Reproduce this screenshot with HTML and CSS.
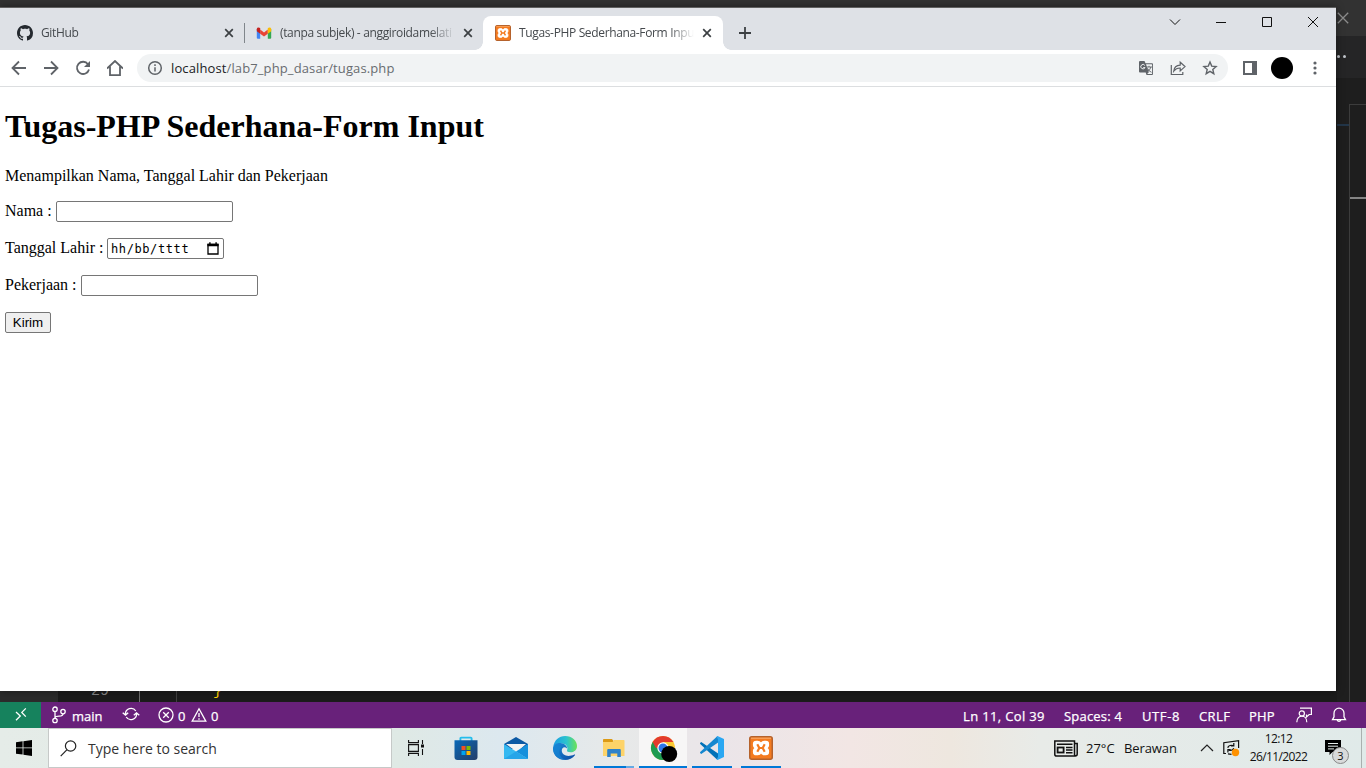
FILE: index.html
```html
<!DOCTYPE html>
<html lang="id">
<head>
<meta charset="utf-8">
<title>Tugas-PHP Sederhana-Form Input</title>
<link rel="stylesheet" href="styles.css">
</head>
<body>
<svg width="0" height="0" class="defs">
  <symbol id="close" viewBox="0 0 16 16"><path d="M4.2 4.2l7.6 7.6M11.8 4.2l-7.6 7.6" stroke="#3c4043" stroke-width="1.7"/></symbol>
  <symbol id="xampp" viewBox="0 0 24 24">
    <rect x=".75" y=".75" width="22.5" height="22.5" rx="2" fill="#f47b20" stroke="#b5622c" stroke-width="1.5"/>
    <path d="M2 2.200h20" stroke="#f9ad6f"/>
    <path d="M7.200 5.300h1.600q2.200 0 3.200 2.200 1-2.200 3.200-2.200h1.600q2.700 0 2.700 2.700v1.200q0 1.500-1.700 2.800 1.700 1.300 1.700 2.800V16q0 2.700-2.700 2.700h-1.600q-2.200 0-3.200-2.200-1 2.200-3.200 2.200H7.200Q4.500 18.700 4.500 16v-1.200q0-1.500 1.700-2.800-1.700-1.300-1.700-2.800V8q0-2.700 2.700-2.700z" fill="#fff" stroke="#fff" stroke-width="1.200" stroke-linejoin="round"/>
    <path d="M8.300 8.300l2 3.700-2 3.700M15.700 8.300l-2 3.700 2 3.700M10.300 12h3.400" fill="none" stroke="#f47b20" stroke-width="2.200"/>
  </symbol>
</svg>
<div class="desktop">
  <div class="editor">
    <div class="ed-title"><svg width="12" height="12" viewBox="0 0 12 12"><path d="M.8.8l10.4 10.4M11.2.8L.8 11.2" stroke="#8c8c8c" stroke-width="1.3"/></svg></div>
    <div class="ed-tabs"><i></i><i></i></div>
    <div class="ed-body">
      <div class="ed-activity"></div>
      <div class="ed-code"><span class="ln">29</span><span class="guide g1"></span><span class="guide g2"></span><span class="brace">}</span></div>
      <div class="ed-blue"></div>
      <div class="ed-ruler"><div class="ed-mark"></div></div>
    </div>
  </div>

  <div class="status">
    <div class="remote"><svg width="16" height="16" viewBox="0 0 16 16" fill="none" stroke="#fff" stroke-width="1.3"><path d="M3 6l4.300 4L3 14.200M12.800 2.400L8.800 6.400l4 4.200"/></svg></div>
    <div class="st branch"><svg width="16" height="18" viewBox="0 0 16 18" fill="none" stroke="#fff" stroke-width="1.3"><circle cx="4" cy="3.2" r="2.2"/><circle cx="4" cy="14.5" r="2.2"/><circle cx="12" cy="5.6" r="2.2"/><path d="M4 5.4v6.9M12 7.8c0 2.4-2 2.4-4 2.4s-4 .3-4 2.1"/></svg><span>main</span></div>
    <div class="st sync"><svg width="18" height="14" viewBox="0 0 18 14" fill="none" stroke="#fff" stroke-width="1.3"><path d="M3.500 7.500A5.600 5.600 0 0 1 13.800 4M14.500 6.500A5.600 5.600 0 0 1 4.200 10M.7 5.700l2.800 2.400 2.700-2.400M17.300 8.300l-2.800-2.400-2.700 2.400"/></svg></div>
    <div class="st probs"><svg width="16" height="16" viewBox="0 0 16 16" fill="none" stroke="#fff" stroke-width="1.3"><circle cx="8" cy="8" r="7"/><path d="M5.2 5.2l5.6 5.6M10.8 5.2l-5.6 5.6"/></svg><span class="n1">0</span><svg width="16" height="16" viewBox="0 0 16 16" fill="none" stroke="#fff" stroke-width="1.3"><path d="M8 1.800l6.800 12.400H1.200zM8 6v4M8 11.200v1.500"/></svg><span class="n2">0</span></div>
    <div class="st-right">
      <span class="s-ln">Ln 11, Col 39</span><span class="s-sp">Spaces: 4</span><span class="s-utf">UTF-8</span><span class="s-crlf">CRLF</span><span class="s-php">PHP</span>
      <svg class="fb" width="18" height="16" viewBox="0 0 18 16" fill="none" stroke="#fff" stroke-width="1.2"><circle cx="6.8" cy="6.4" r="2.6"/><path d="M1.8 15.2c0-8 10-8 10 0M5 1.2h11.4v6.300h-2.200L11.500 10V7.500"/></svg>
      <svg class="bell" width="16" height="16" viewBox="0 0 16 16" fill="none" stroke="#fff" stroke-width="1.3"><path d="M1.500 12.600h13L13 9.800V6.200a5 5 0 0 0-10 0v3.600zM6.200 13a1.900 1.900 0 0 0 3.600 0"/></svg>
    </div>
  </div>

  <div class="taskbar">
    <div class="start"><svg width="16" height="16" viewBox="0 0 16 16"><path d="M0 2.200l6.600-.9v6.200H0zM7.400 1.200L16 0v7.500H7.400zM0 8.300h6.600v6.300L0 13.700zM7.400 8.300H16V16l-8.600-1.200z"/></svg></div>
    <div class="search"><svg width="17" height="17" viewBox="0 0 17 17" fill="none" stroke="#222" stroke-width="1.2"><circle cx="10.6" cy="6" r="5.2"/><path d="M6.8 9.8L.7 16.2"/></svg><span>Type here to search</span></div>
    <div class="app"><svg width="16" height="16" viewBox="0 0 16 16" fill="none" stroke="#111" stroke-width="1.1"><path d="M.6 0v2.600h9.800V0M.6 16v-2.600h9.800V16M.6 4.600h9.800v6.800H.6zM14.500 0v4M14.500 9v6"/><path d="M13 4.500h3v3h-3z" fill="#111" stroke="none"/></svg></div>
    <div class="app m2"><svg width="24" height="24" viewBox="0 0 24 24"><defs><linearGradient id="st" x2="1" y2="1"><stop stop-color="#0869b8"/><stop offset="1" stop-color="#253d68"/></linearGradient></defs><path d="M6.400 6V2.400q0-.8.8-.8h9.600q.8 0 .8.800V6" fill="none" stroke="#25bdec" stroke-width="1.900"/><path d="M.5 4.300h23V21q0 3-3 3h-17q-3 0-3-3z" fill="url(#st)"/><path d="M7.500 10h4v4h-4z" fill="#f25022"/><path d="M12.500 10h4v4h-4z" fill="#7fba00"/><path d="M7.500 15h4v4h-4z" fill="#00a4ef"/><path d="M12.500 15h4v4h-4z" fill="#ffb900"/></svg></div>
    <div class="app m2"><svg width="24" height="22" viewBox="0 0 24 22"><path d="M0 7L12 0l12 7v5H0z" fill="#0c59a4"/><path d="M2 7h20l-9 8z" fill="#f3f3f3"/><path d="M0 7l24 15H0z" fill="#35b8f1"/><path d="M24 7v15L12 14.500z" fill="#1690dc"/><path d="M0 22l12-7.500L24 22z" fill="#26a5e9"/></svg></div>
    <div class="app m1"><svg width="24" height="24" viewBox="0 0 24 24"><defs><linearGradient id="eg" x2="1"><stop stop-color="#1b9de2"/><stop offset=".55" stop-color="#2bc3cf"/><stop offset="1" stop-color="#6de256"/></linearGradient><linearGradient id="eb" x2="1" y2="1"><stop stop-color="#1a8cdb"/><stop offset="1" stop-color="#0b4ba3"/></linearGradient></defs><path d="M.3 11C1 4.300 6 0 12.200 0 19 0 24 4.600 24 10c0 4-3 6.300-6.400 6.300-2.600 0-4.100-1-3.500-2.300.9-1.800.3-5.800-4.600-6.600C6 6.800 2 8 .3 11z" fill="url(#eg)"/><path d="M0 12.200C.3 8.500 4 6.600 7.500 7c3.500.3 6.300 2.500 6.600 5.400C11 9.800 8.500 12 8.800 15c.4 4 5.600 6.700 12.600 3.500.6-.2.9 0 .5.700C19.800 22.200 16 24 12 24 5.300 24-.3 19 0 12.200z" fill="url(#eb)"/><path d="M8.500 10.500C4 16 7 22.500 13 23.900 5 24.500-.2 18 0 12.200c1-2.500 5-4 8.500-1.700z" fill="#1685d4" opacity=".7"/></svg></div>
    <div class="app fold"><svg width="22" height="19" viewBox="0 0 22 19"><path d="M0 .8Q0 0 .8 0h8.200L10.500 2v2H0z" fill="#dc9a16"/><path d="M0 3h9.500l1.500-2h9.700q.8 0 .8.800V17H0z" fill="#fdd369"/><path d="M4.200 18V11q0-1 1-1h11.600q1 0 1 1v7h-3.500v-3.500H7.700V18z" fill="#2f82c9"/></svg><b class="line split"></b></div>
    <div class="app chrome m2"><svg width="28" height="28" viewBox="0 0 28 28"><circle cx="13" cy="13" r="12" fill="#fcc934"/><path d="M13 13L2.600 7A12 12 0 0 0 13 25l5-9-5-3z" fill="#1e9b50"/><path d="M2.600 7A12 12 0 0 1 23.400 7H13v6H6z" fill="#e33b2e"/><circle cx="13" cy="13" r="5.700" fill="#fff"/><circle cx="13" cy="13" r="4.500" fill="#2d75e8"/><circle cx="19.200" cy="19" r="8" fill="#000"/></svg><b class="line full"></b></div>
    <div class="app m1"><svg width="24" height="24" viewBox="0 0 24 24"><path d="M1.600 6.300q-.5-.4-1 .1L.2 7q-.4.500 0 1L17.500 24l1-6.200z" fill="#0071b8"/><path d="M1.600 17.700q-.5.400-1-.1L.2 17q-.4-.5 0-1L17.500 0l1 6.200z" fill="#1687cf"/><path d="M17.500 0L24 3v18l-6.500 3-.9-1q1.400-.4 1.400-1.800V2.800Q18 1.400 16.600 1z" fill="#2aa7f2"/></svg><b class="line"></b></div>
    <div class="app m1"><svg width="24" height="24"><use href="#xampp"/></svg><b class="line"></b></div>
    <div class="tray">
      <svg class="news" width="24" height="17" viewBox="0 0 24 17" fill="none" stroke="#111" stroke-width="1.500"><path d="M20.500 3.500h2.700v10.500q0 2-2 2M.8 1h19.700v13.500q0 1.500 1.500 1.500H2.500Q.8 16 .8 14.500zM3 4.200h15.500M12 7.500h6.500M12 10h6.500M12 12.700h6.500"/><rect x="3.600" y="7.500" width="6" height="5" stroke-width="1.800"/></svg>
      <span class="temp">27°C</span><span class="weather">Berawan</span>
      <svg class="caret" width="14" height="8" viewBox="0 0 14 8"><path d="M1 7l6-6 6 6" fill="none" stroke="#222" stroke-width="1.200"/></svg>
      <svg class="upd" width="17" height="18" viewBox="0 0 17 18" fill="none" stroke="#111" stroke-width="1.200"><path d="M8.500 15.400L5 14.900M3 14.500H.8V3.700L15.600 1.700V9"/><path d="M4.700 8.700Q6 5.500 10.300 6.500M10.800 4v3H8M10.800 9.300q-1.300 3-5 1.900M4.900 13.500v-2.800h2.800"/><circle cx="12.500" cy="13.500" r="3.700" fill="#ff9200" stroke="none"/></svg>
      <div class="clock"><span class="time">12:12</span><span class="date">26/11/2022</span></div>
      <div class="notif"><svg width="18" height="16" viewBox="0 0 18 16"><path d="M0 0h16v12H7.500L4.500 15v-3H0z"/><path d="M3 3.500h10M3 6.200h10M3 8.900h6" stroke="#e5ecea"/></svg><span class="badge">3</span></div>
    </div>
  </div>

  <div class="window">
    <div class="tabs">
      <div class="tab"><svg width="16" height="16" viewBox="0 0 16 16"><path fill="#24292f" d="M8 0C3.580 0 0 3.580 0 8c0 3.540 2.290 6.530 5.470 7.590.4.070.55-.17.55-.38 0-.19-.01-.82-.01-1.490-2.010.37-2.530-.49-2.690-.94-.09-.23-.48-.94-.82-1.130-.28-.15-.68-.52-.01-.53.630-.01 1.080.58 1.230.82.720 1.210 1.870.87 2.330.66.070-.52.280-.87.510-1.070-1.780-.2-3.640-.89-3.640-3.950 0-.87.310-1.590.82-2.150-.08-.2-.36-1.020.08-2.120 0 0 .67-.21 2.200.82.640-.18 1.320-.27 2-.27s1.360.09 2 .27c1.530-1.040 2.200-.82 2.200-.82.440 1.100.16 1.920.08 2.120.51.560.82 1.270.82 2.150 0 3.070-1.870 3.750-3.650 3.950.29.250.54.730.54 1.480 0 1.070-.01 1.930-.01 2.200 0 .21.150.46.550.38A8.010 8.010 0 0 0 16 8c0-4.420-3.580-8-8-8z"/></svg><span class="label">GitHub</span><svg width="16" height="16"><use href="#close"/></svg></div>
      <div class="tab second"><svg width="16" height="16" viewBox="0 0 16 16"><path d="M.8 4v8.700q0 1 1 1h2.400V7z" fill="#4285f4"/><path d="M15.200 4v8.700q0 1-1 1h-2.400V7z" fill="#34a853"/><path d="M4.200 4.500L8 7.400l3.800-2.900v4.300L8 11.600 4.200 8.800z" fill="#ea4335"/><path d="M.8 4.300c0-2 1.800-2.500 3.400-1.200v5.700L.8 6.200z" fill="#c5221f"/><path d="M15.200 4.300c0-2-1.800-2.500-3.400-1.200v5.700l3.400-2.600z" fill="#fbbc04"/></svg><span class="label">(tanpa subjek) - anggiroidamelati</span><svg width="16" height="16"><use href="#close"/></svg></div>
      <div class="tab active"><svg width="16" height="16"><use href="#xampp"/></svg><span class="label">Tugas-PHP Sederhana-Form Input</span><svg width="16" height="16"><use href="#close"/></svg></div>
      <svg class="plus" width="12" height="12" viewBox="0 0 12 12"><path d="M6 0v12M0 6h12" stroke="#3c4043" stroke-width="1.800"/></svg>
      <div class="controls">
        <svg width="46" height="28" viewBox="0 0 46 28"><path d="M18 11.500l5 5 5-5"/></svg>
        <svg width="46" height="28" viewBox="0 0 46 28"><path d="M18 14.500h10"/></svg>
        <svg width="46" height="28" viewBox="0 0 46 28"><path d="M18.500 9.500h9v9h-9z"/></svg>
        <svg width="46" height="28" viewBox="0 0 46 28"><path d="M18 9l10 10M28 9L18 19"/></svg>
      </div>
    </div>
    <div class="toolbar">
      <div class="nav"><svg viewBox="0 0 16 16"><path d="M15 8H2M8 1.500L1.500 8 8 14.500"/></svg></div>
      <div class="nav"><svg viewBox="0 0 16 16"><path d="M1 8h13M8 1.500L14.500 8 8 14.500"/></svg></div>
      <div class="nav"><svg viewBox="0 0 16 16"><path d="M13 4.200A6.100 6.100 0 1 0 14 9.500"/><path d="M15 1v6H9z" fill="#5f6368" stroke="none"/></svg></div>
      <div class="nav"><svg viewBox="0 0 16 16"><path d="M0 8.500L8 1l8 7.500M3 6.500v8.700h10V6.500" /></svg></div>
      <div class="omni">
        <svg width="16" height="16" viewBox="0 0 16 16" fill="none" stroke="#5f6368" stroke-width="1.500"><circle cx="8" cy="8" r="6.300"/><path d="M8 7.200v4.300M8 4.300v1.600"/></svg>
        <span class="url"><b>localhost</b>/lab7_php_dasar/tugas.php</span>
        <svg width="16" height="16" viewBox="0 0 16 16"><path d="M1 2q0-1 1-1h4.500l1 2.300H14q1 0 1 1V14q0 1-1 1H8.500l-.8-2.500H2q-1 0-1-1z" fill="#5f6368"/><path d="M8 4.200h5.500q.6 0 .6.600v8.700q0 .6-.6.600H9.200l1.600-1.800z" fill="#f1f3f4"/><path d="M8.700 7H14M11 5.800V7M12.800 7q-.5 3-3 4.300M9.500 8.300q1.300 3 4 4" stroke="#5f6368" fill="none" stroke-width=".9"/><path d="M6.800 5.400A2.200 2.200 0 1 0 7 7.600H5.200" fill="none" stroke="#f1f3f4"/></svg>
        <svg width="16" height="16" viewBox="0 0 16 16" fill="none" stroke="#5f6368" stroke-width="1.200"><path d="M1.300 5v9.500h11.500V12"/><path d="M3.700 11.200q.6-5.700 6.500-6V2.200L15 6.600l-4.800 4.300V8q-4-.1-6.500 3.200z"/></svg>
        <svg width="16" height="16" viewBox="0 0 16 16" fill="none" stroke="#5f6368" stroke-width="1.400"><path d="M8 2.100l1.700 4 4.400.4-3.300 2.900 1 4.300L8 11.400l-3.800 2.300 1-4.300-3.300-2.900 4.400-.4z"/></svg>
      </div>
      <svg class="panel" width="14" height="14" viewBox="0 0 14 14"><path d="M0 0h14v14H0z" fill="#5f6368"/><path d="M2 2h7v10H2z" fill="#fff"/></svg>
      <span class="avatar"></span>
      <svg class="dots" width="4" height="14" viewBox="0 0 4 14" fill="#5f6368"><circle cx="2" cy="2" r="1.600"/><circle cx="2" cy="7" r="1.600"/><circle cx="2" cy="12" r="1.600"/></svg>
    </div>
    <div class="page">
      <h1>Tugas-PHP Sederhana-Form Input</h1>
      <p class="intro">Menampilkan Nama, Tanggal Lahir dan Pekerjaan</p>
      <form>
        <div class="row"><label class="l-nama">Nama :</label><input type="text"></div>
        <div class="row"><label class="l-tgl">Tanggal Lahir :</label><span class="datebox"><span>hh/bb/tttt</span><svg width="12" height="13" viewBox="0 0 12 13"><path d="M1 2.500h10v9.500H1z" fill="none" stroke="#000" stroke-width="1.300"/><path d="M.4 1.700h11.200v2.500H.4zM2.200.2h1.400V2H2.200zM8.400.2h1.400V2H8.400z"/></svg></span></div>
        <div class="row"><label class="l-pek">Pekerjaan :</label><input type="text"></div>
        <button type="button">Kirim</button>
      </form>
    </div>
  </div>
</div>
</body>
</html>
```
FILE: styles.css
```css
* { box-sizing: border-box; }
html, body { margin: 0; overflow: hidden; }
body { width: 1366px; height: 768px; font-family: "Open Sans", "Noto Sans", sans-serif; }
svg { display: block; flex: none; }
.defs { position: absolute; }
.desktop { position: relative; display: flex; flex-direction: column; width: 1366px; height: 768px; }

/* Editor behind the browser */
.editor { flex: 1; display: flex; flex-direction: column; min-height: 0; background: #1e1e1e; overflow: hidden; }
.ed-title { flex: none; height: 36px; background: #323232; display: flex; justify-content: flex-end; align-items: center; padding-right: 17px; }
.ed-tabs { flex: none; height: 42px; background: #252526; display: flex; justify-content: flex-end; align-items: center; gap: 3px; padding: 0 20px 2px 0; }
.ed-tabs i { width: 3px; height: 3px; border-radius: 50%; background: #c0c4ca; }
.ed-body { flex: 1; display: flex; }
.ed-activity { width: 58px; background: #2b2b2b; }
.ed-code { flex: 1; display: flex; align-items: flex-end; height: 624px; background: #1b1b1b; }
.ln { width: 81px; padding-left: 33px; font: 15px/18px "Liberation Mono", monospace; color: #858585; padding-bottom: 1px; }
.guide { width: 37px; height: 12px; border-left: 1px solid #707070; }
.g2 { border-color: #404040; }
.brace { font: 15px/18px "Liberation Mono", monospace; color: #ffd700; padding-bottom: 1px; }
.ed-blue { align-self: flex-start; width: 12px; height: 2px; margin-top: 46px; background: #223548; }
.ed-ruler { width: 17px; margin-top: 26px; border-left: 1px solid #3c3c3c; border-top: 1px solid #3c3c3c; }
.ed-mark { margin-top: 92px; height: 2px; background: #858585; }

.status { flex: none; height: 26px; background: #68217a; color: #fff; display: flex; font-size: 13px; line-height: 26px; white-space: nowrap; -webkit-text-stroke: .25px #fff; }
.status span { padding-top: 1px; }
.remote { width: 41px; background: #16825d; display: flex; align-items: center; justify-content: center; }
.remote svg { margin-top: -2px; }
.st { display: flex; align-items: center; }
.branch { width: 81px; padding-left: 10px; gap: 4px; }
.branch span { padding-left: 1px; }
.branch svg { margin-top: -1px; }
.sync { width: 36px; margin-top: -2px; padding-bottom: 0; }
.n1 { width: 17px; padding-left: 4px; }
.n2 { padding-left: 4px; }
.st-right { margin-left: auto; width: 404px; padding-left: 1px; display: flex; align-items: center; }
.s-ln { width: 101px; letter-spacing: .35px; }
.s-sp { width: 78px; letter-spacing: .2px; }
.s-utf { width: 57px; letter-spacing: .6px; }
.s-crlf { width: 50px; letter-spacing: .4px; }
.s-php { width: 46px; letter-spacing: .2px; }
.fb, .bell { margin-top: -1px; }
.bell { margin-left: 18px; }

.taskbar { flex: none; height: 40px; display: flex; background: linear-gradient(90deg, #e5ece8 0, #dfe9e5 400px, #dce8ef 500px, #e7e9e9 620px, #ebe5e9 720px, #f2e6e4 850px, #eee7df 950px, #e8ebe8 1040px, #e0eae9 1366px); }
.start { width: 48px; display: flex; align-items: center; justify-content: center; }
.search { width: 344px; border: 1px solid #c6c9c8; background: #fff; display: flex; align-items: center; padding-left: 11px; gap: 11px; color: #333; font-size: 14px; white-space: nowrap; }
.app { position: relative; width: 48px; display: flex; align-items: center; justify-content: center; }
.m1 { margin-left: 1px; }
.m2 { margin-left: 2px; }
.fold svg { margin-left: 2px; }
.chrome { background: #f7f6f6; }
.chrome svg { margin-left: 2px; margin-top: 2px; }
.line { position: absolute; left: 4px; bottom: 0; width: 40px; height: 2px; background: #0078d7; }
.line.full { left: 0; width: 48px; }
.line.split { left: 5px; background: linear-gradient(90deg, #0078d7 32px, #66aae4 32px); }
.tray { flex: 1; display: flex; align-items: center; padding-left: 269px; font-size: 13px; color: #111; white-space: nowrap; }
.temp { margin-left: 8px; width: 38px; letter-spacing: 0; }
.weather { width: 76px; letter-spacing: -.1px; }
.upd { margin-left: 9px; }
.clock { width: 77px; display: flex; flex-direction: column; align-items: center; font-size: 12px; line-height: 18px; letter-spacing: -.6px; padding-bottom: 1px; }
.notif { position: relative; align-self: stretch; display: flex; align-items: center; width: 45px; padding-left: 8px; border-right: 1px solid #a9b0af; }
.badge { position: absolute; left: 15px; top: 19px; width: 17px; height: 17px; border-radius: 50%; border: 1px solid #888; background: #d8dada; font-size: 11px; line-height: 15px; text-align: center; }

/* Browser window */
.window { position: absolute; left: 0; top: 7px; width: 1336px; height: 684px; border-top: 1px solid #606060; background: #fff; display: flex; flex-direction: column; box-shadow: 0 0 8px rgba(0,0,0,.4); }
.tabs { flex: none; height: 42px; background: #dee1e6; padding: 8px 0 0 5px; display: flex; }
.tab { position: relative; width: 239px; height: 34px; padding-left: 12px; display: flex; align-items: center; flex: none; color: #45494d; font-size: 12px; letter-spacing: -.35px; }
.tab.second { border-left: 1px solid #80868b; height: 20px; margin-top: 7px; padding-left: 11px; }
.label { width: 175px; margin: -2px 5px 0 8px; overflow: hidden; white-space: nowrap; -webkit-mask-image: linear-gradient(90deg, #000 150px, transparent 175px); mask-image: linear-gradient(90deg, #000 150px, transparent 175px); }
.tab.active { width: 240px; background: #fff; border-radius: 8px 8px 0 0; }
.tab.active::before, .tab.active::after { content: ""; position: absolute; bottom: 0; width: 8px; height: 8px; }
.tab.active::before { left: -8px; background: radial-gradient(circle at 0 0, transparent 7.500px, #fff 8px); }
.tab.active::after { right: -8px; background: radial-gradient(circle at 100% 0, transparent 7.500px, #fff 8px); }
.plus { margin: 11px 0 0 16px; }
.controls { margin: -8px 0 0 auto; display: flex; }
.controls path { fill: none; stroke: #111; stroke-width: 1; }
.toolbar { flex: none; height: 37px; padding-left: 3px; border-bottom: 1px solid #dcdee0; display: flex; align-items: center; }
.nav { width: 32px; display: flex; justify-content: center; }
.nav svg { width: 16px; height: 16px; fill: none; stroke: #5f6368; stroke-width: 1.800; }
.omni { width: 1091px; height: 28px; margin-left: 6px; padding: 0 10px; border-radius: 14px; background: #f1f3f4; display: flex; align-items: center; gap: 16px; }
.url { flex: 1; margin-left: -8px; font-size: 13px; letter-spacing: .12px; color: #686c70; }
.url b { font-weight: 400; color: #202124; }
.panel { margin-left: 15px; }
.avatar { width: 22px; height: 22px; margin-left: 14px; border-radius: 50%; background: #000; }
.dots { margin-left: 19.500px; }

.page { flex: 1; padding: 0 5px; font-family: "Liberation Serif", "Times New Roman", serif; font-size: 16px; color: #000; }
.page h1 { margin: 21px 0; font-size: 32px; line-height: 37px; }
.page p { margin: 22px 0 16px; line-height: 18px; }
.row { display: flex; align-items: center; height: 21px; margin-bottom: 16px; }
.row label { flex: none; white-space: nowrap; margin-top: -1px; }
.l-nama { width: 51px; }
.l-tgl { width: 102px; }
.l-pek { width: 76px; }
.row input, .datebox { width: 177px; height: 21px; border: 1px solid #767676; border-radius: 2px; padding: 0 3px; background: #fff; }
.datebox { width: 117px; display: flex; align-items: center; justify-content: space-between; padding-right: 4px; font: 12px "DejaVu Sans Mono", monospace; letter-spacing: .6px; }
button { display: block; width: 46px; height: 21px; padding: 0; border: 1px solid #767676; border-radius: 2px; background: #efefef; font: 13.333px "Liberation Sans", Arial, sans-serif; color: #000; }
```
